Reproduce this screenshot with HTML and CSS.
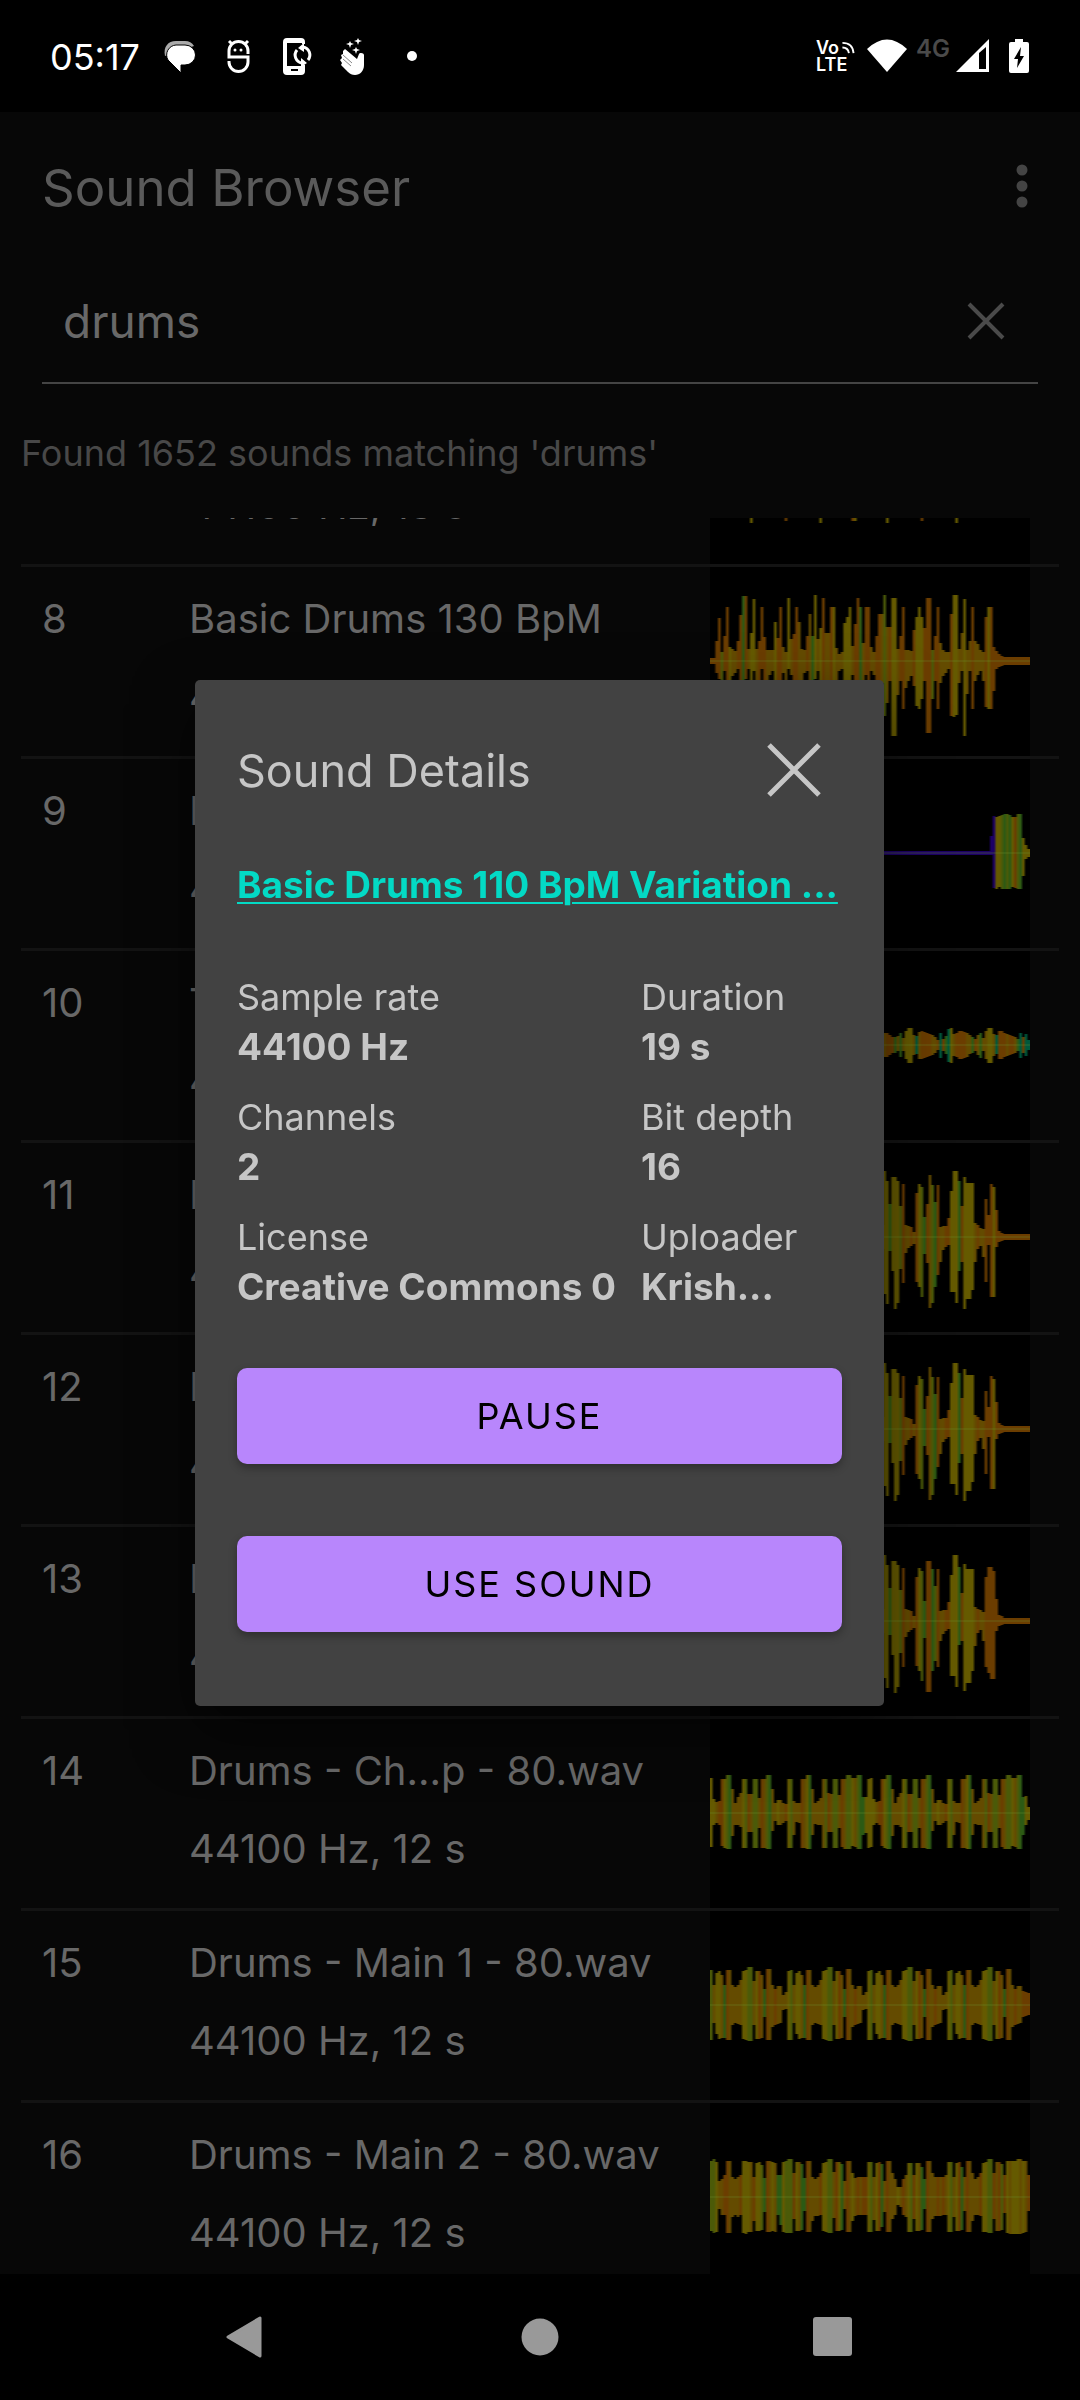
FILE: index.html
```html
<!DOCTYPE html>
<html lang="en">
<head>
<meta charset="utf-8">
<meta name="viewport" content="width=device-width, initial-scale=1">
<title>Sound Browser</title>
<link rel="stylesheet" href="styles.css">
</head>
<body>
<div class="screen">
  <header class="status">
    <span class="clock">05:17</span>
    <svg class="note" viewBox="0 0 36 40" aria-hidden="true"><path d="M3 20C1 11 6 5 14 5h9q6 0 9 5" fill="#aaa"/><path d="M14 9h9a10 9.500 0 0 1 0 20h-4v8L6 24A10 10 0 0 1 14 9z" fill="#fff" stroke="#000" stroke-width="1"/></svg>
    <svg class="note" viewBox="0 0 36 40" aria-hidden="true"><path d="M28 18v-3a9.500 9.500 0 0 0-19 0v6h19v5a9.500 9.500 0 0 1-19 0v-1M9 5l4 4M28 5l-4 4" fill="none" stroke="#fff" stroke-width="3"/><circle cx="15" cy="14" r="1.500" fill="#fff"/><circle cx="21" cy="14" r="1.500" fill="#fff"/></svg>
    <svg class="note" viewBox="0 0 36 40" aria-hidden="true"><path d="M9 2h14q4 0 4 4v2h-3v-1H9v23h15v-2l3 1v6q0 4-4 4H9q-4 0-4-4V6q0-4 4-4z" fill="#fff"/><path d="M13 34h7" stroke="#000" stroke-width="2"/><path d="M24 27a8 8 0 0 1-5-13M25 11a8 8 0 0 1 5 13" fill="none" stroke="#fff" stroke-width="3"/><path d="M26 7v9l-6-4zM23 31v-9l6 5z" fill="#fff"/></svg>
    <svg class="note" viewBox="0 0 36 40" aria-hidden="true"><path d="M7 15l2-2 12 10 2-5c1-2 5-1 5 1v10c0 6-4 10-9 10-3 0-5-1-7-3L5 29l1-2-2-3 2-2-1-3 2-1z" fill="#fff"/><path d="M7 19l9 8M7 23l8 7" stroke="#888" stroke-width="1"/><path d="M14 5l1 2 3 1-3 1-1 3-1-3-3-1 3-1zM22 2l1 2 3 1-3 1-1 3-1-3-3-1 3-1zM20 11l1 2 3 1-3 1-1 3-1-3-3-1 3-1z" fill="#fff"/></svg>
    <span class="more-notes"></span>
    <span class="status-gap"></span>
    <span class="volte"><span>Vo<svg viewBox="0 0 14 14" aria-hidden="true"><path d="M1 2q11 0 12 11M1 7q6 0 7 6" fill="none" stroke="#fff" stroke-width="2"/></svg></span><span>LTE</span></span>
    <svg class="wifi" viewBox="0 0 40 34" aria-hidden="true"><path d="M20 33L0 10q20-19 40 0z" fill="#fff"/></svg>
    <span class="net">4G</span>
    <svg class="signal" viewBox="0 0 34 34" aria-hidden="true"><path d="M33 0v33H0z" fill="#fff"/><path d="M23 14l7-6v22h-7z" fill="#000"/></svg>
    <svg class="battery" viewBox="0 0 20 34" aria-hidden="true"><path d="M6 0h8v3h4q2 0 2 2v27q0 2-2 2H2q-2 0-2-2V5q0-2 2-2h4z" fill="#fff"/><path d="M12 8L5 20h4l-1 9 7-12h-4z" fill="#000"/></svg>
  </header>

  <main class="app">
    <div class="toolbar">
      <h1>Sound Browser</h1>
      <button class="icon-button" aria-label="More options"><svg viewBox="0 0 12 44" width="12" height="44"><g fill="#444"><circle cx="6" cy="6" r="5.500"/><circle cx="6" cy="22" r="5.500"/><circle cx="6" cy="38" r="5.500"/></g></svg></button>
    </div>
    <form class="search" onsubmit="return false">
      <input type="text" aria-label="Search sounds" value="drums">
      <button type="reset" class="icon-button" aria-label="Clear"><svg viewBox="0 0 38 38" width="38" height="38"><path d="M2 2l34 34M36 2L2 36" stroke="#4a4a4a" stroke-width="4"/></svg></button>
    </form>
    <p class="found">Found 1652 sounds matching 'drums'</p>
    <ul class="list" id="list">
      <li class="row"><span class="num">7</span><div class="info"><span>Basic Drums 120 BpM</span><span>44100 Hz, 18 s</span></div><canvas class="wave" data-wave="ticks"></canvas></li>
      <li class="row"><span class="num">8</span><div class="info"><span>Basic Drums 130 BpM</span><span>44100 Hz, 16 s</span></div><canvas class="wave" data-wave="basic"></canvas></li>
      <li class="row"><span class="num">9</span><div class="info"><span>Drum Hit</span><span>44100 Hz, 4 s</span></div><canvas class="wave" data-wave="hit"></canvas></li>
      <li class="row"><span class="num">10</span><div class="info"><span>Tribal Drums</span><span>44100 Hz, 8 s</span></div><canvas class="wave" data-wave="tribal"></canvas></li>
      <li class="row"><span class="num">11</span><div class="info"><span>Basic Drums 110 BpM</span><span>44100 Hz, 19 s</span></div><canvas class="wave" data-wave="variation"></canvas></li>
      <li class="row"><span class="num">12</span><div class="info"><span>Basic Drums 120 BpM</span><span>44100 Hz, 18 s</span></div><canvas class="wave" data-wave="variation"></canvas></li>
      <li class="row"><span class="num">13</span><div class="info"><span>Basic Drums 130 BpM</span><span>44100 Hz, 16 s</span></div><canvas class="wave" data-wave="variationFast"></canvas></li>
      <li class="row"><span class="num">14</span><div class="info"><span>Drums - Ch...p - 80.wav</span><span>44100 Hz, 12 s</span></div><canvas class="wave" data-wave="chop"></canvas></li>
      <li class="row"><span class="num">15</span><div class="info"><span>Drums - Main 1 - 80.wav</span><span>44100 Hz, 12 s</span></div><canvas class="wave" data-wave="main1"></canvas></li>
      <li class="row"><span class="num">16</span><div class="info"><span>Drums - Main 2 - 80.wav</span><span>44100 Hz, 12 s</span></div><canvas class="wave" data-wave="main2"></canvas></li>
    </ul>

    <div class="scrim">
      <section class="dialog" role="dialog" aria-labelledby="dialog-title">
        <div class="dialog-head">
          <h2 id="dialog-title">Sound Details</h2>
          <button class="icon-button" aria-label="Close"><svg viewBox="0 0 54 54" width="54" height="54"><path d="M2 2l50 50M52 2L2 52" stroke="#c6c6c6" stroke-width="5"/></svg></button>
        </div>
        <a class="sound-link" href="#">Basic Drums 110 BpM Variation ...</a>
        <dl class="facts">
          <div><dt>Sample rate</dt><dd>44100 Hz</dd></div>
          <div><dt>Duration</dt><dd>19 s</dd></div>
          <div><dt>Channels</dt><dd>2</dd></div>
          <div><dt>Bit depth</dt><dd>16</dd></div>
          <div><dt>License</dt><dd>Creative Commons 0</dd></div>
          <div><dt>Uploader</dt><dd>Krish...</dd></div>
        </dl>
        <button class="action">PAUSE</button>
        <button class="action">USE SOUND</button>
      </section>
    </div>
  </main>

  <nav class="navbar">
    <button class="icon-button" aria-label="Back"><svg viewBox="0 0 42 42" width="42" height="42"><path d="M34 2v38L2 21z" fill="#999" stroke="#999" stroke-width="3" stroke-linejoin="round"/></svg></button>
    <button class="icon-button" aria-label="Home"><svg viewBox="0 0 42 42" width="42" height="42"><circle cx="21" cy="21" r="18.500" fill="#999"/></svg></button>
    <button class="icon-button" aria-label="Recents"><svg viewBox="0 0 42 42" width="42" height="42"><rect x="1" y="1" width="39" height="39" rx="3" fill="#999"/></svg></button>
  </nav>
</div>
<script src="waves.js"></script>
</body>
</html>
```
FILE: styles.css
```css
* { box-sizing: border-box; margin: 0; padding: 0; }
body { background: #000; color: #686868; font-family: "Inter", sans-serif; }
.screen { display: flex; flex-direction: column; height: 100vh; }

.icon-button { display: flex; align-items: center; justify-content: center; border: 0; background: none; cursor: pointer; }

.status { display: flex; align-items: center; height: 112px; padding: 0 50px; color: #fff; flex: none; }
.clock { font-size: 36px; line-height: 44px; padding-top: 2px; width: 112px; }
.note { width: 36px; height: 40px; margin-right: 22px; flex: none; }
.more-notes { width: 10px; height: 10px; border-radius: 50%; background: #fff; margin-left: 13px; }
.status-gap { flex: 1; }
.volte { display: flex; flex-direction: column; font-size: 18px; line-height: 17px; font-weight: 600; }
.volte svg { width: 14px; height: 13px; margin-left: 2px; }
.wifi { width: 40px; height: 34px; margin-left: 12px; }
.net { margin: 0 6px 14px 9px; font-size: 24px; line-height: 24px; font-weight: 600; color: #4a4a4a; }
.signal { width: 34px; height: 34px; }
.battery { width: 20px; height: 34px; margin: 0 1px 0 19px; }

.app { position: relative; display: flex; flex-direction: column; flex: 1; min-height: 0; background: #070707; }
.toolbar { display: flex; align-items: center; justify-content: space-between; height: 148px; padding: 0 52px 0 42px; flex: none; }
.toolbar h1 { font-size: 51px; line-height: 64px; padding-top: 4px; font-weight: 400; color: #5a5a5a; }
.search { display: flex; align-items: center; height: 124px; margin: 0 42px; padding: 0 33px 0 21px; border-bottom: 2px solid #444; flex: none; }
.search input { flex: 1; min-width: 0; border: 0; outline: 0; background: none; color: #686868; font: 400 46px "Inter", sans-serif; }
.found { padding: 45px 21px 0; height: 134px; font-size: 36px; line-height: 48px; color: #484848; flex: none; }

.list { flex: 1; min-height: 0; overflow-y: auto; scrollbar-width: none; list-style: none; padding: 0 21px; font-size: 40px; }
.row { display: flex; height: 192px; padding: 0 29px 0 21px; border-bottom: 3px solid #131313; }
.num { width: 147px; padding-top: 27px; line-height: 50px; }
.info { display: flex; flex-direction: column; flex: 1; gap: 28px; padding-top: 27px; line-height: 50px; white-space: nowrap; }
.wave { width: 320px; height: 189px; background: #000; flex: none; }

.scrim { position: absolute; inset: 0; display: flex; align-items: center; padding: 0 196px 0 195px; }
.dialog { flex: 1; min-width: 0; padding: 42px 42px 74px; border-radius: 5px; background: #424242; color: #c6c6c6; box-shadow: 0 24px 60px rgba(0, 0, 0, .5); }
.dialog-head { display: flex; align-items: center; justify-content: space-between; height: 96px; padding-right: 21px; }
.dialog h2 { font-size: 45px; font-weight: 400; }
.sound-link { display: block; margin-top: 42px; font-size: 37px; line-height: 50px; font-weight: 700; color: #03dac5; white-space: nowrap; text-decoration-thickness: 2px; text-underline-offset: 4px; }
.facts { display: grid; grid-template-columns: 404px 1fr; row-gap: 20px; margin: 62px 0 56px; font-size: 36px; line-height: 50px; white-space: nowrap; }
.facts dd { font-size: 37px; font-weight: 700; }
.action { display: block; width: 100%; height: 96px; border: 0; border-radius: 10px; background: #b886fc; color: #000; font: 400 36px "Inter", sans-serif; letter-spacing: 2px; box-shadow: 0 4px 8px rgba(0, 0, 0, .3); }
.action + .action { margin-top: 72px; }

.navbar { display: flex; align-items: center; justify-content: center; gap: 251px; height: 126px; flex: none; }
```
FILE: waves.js
```js
// Each column of a waveform is "up/down" in pixels plus an optional colour key.
const COLORS = { o: '#6b3d00', y: '#655a00', g: '#4b5a08', G: '#2c5a14', t: '#00583c', p: '#1c0066', a: '#644b00' };
const rep = (s, n) => Array(n).fill(s).join(' ');

const chopLoop = '35/34y 14/12y 11/10 12/12o 34/33o 34/35y 38/36g 38/36G 24/23 10/12 16/12 20/14 34/35y 34/35g 19/19o 19/19 34/35g 34/35g 15/15 34/35o 34/35 38/36g 38/36G 24/18 10/8 13/12y 13/12 10/10 9/8o 34/35y 34/35g 12/22 10/9 10/10 34/35o 34/35 38/36y 38/36G 24/22 10/11 12/12 15/12 34/35 34/35g 20/19o 19/19 34/35g 34/35g 18/15 34/34o 34/36 38/36g 38/36g 35/33y 35/34 38/36g 38/36G 16/22G 16/20y 34/35y';
const mainLoop = '35/35g 20/18 32/29y 34/34y 30/33 20/33G 35/35o 35/35 20/20 18/18 20/19 25/20 34/34y 35/35y 38/36g 38/36g 24/20 34/34y 34/34o 30/33 16/12G 36/35o 36/35 20/22 16/20o 19/19 19/18 10/5 13/4 34/35y';
const variationTail = '66/57y 56/67y 33/14G 60/34y 60/72y 56/66y 31/32g 53/46o 12/16 11/11 10/9o 5/7 44/45o 53/50y 50/60g 20/17G ';

const WAVES = {
  ticks: rep('20/3', 15) + ' 20/54y ' + rep('20/3', 12) + ' 20/52o ' + rep('20/3', 12) + ' 20/54y ' + rep('20/3', 11) + ' 20/52o 20/52y ' + rep('20/3', 11) + ' 20/54y ' + rep('20/3', 12) + ' 20/52o ' + rep('20/3', 12) + ' 20/54y',
  basic: '3/3o 3/3o 20/12o 43/18o 9/22g 25/10o 54/20o 14/20y 12/15 10/12 20/8o 46/22o 65/22G 65/18o 12/8 28/22y 62/10y 12/22 20/22o 54/8o 24/22o 11/22 11/14 11/10 39/22y 23/22o 54/22o 14/12 9/22 63/8y 22/14 27/22o 54/22o 39/22 12/20 11/12 25/10o 47/22 25/22G 66/18y 22/10 33/22y 63/22o 28/22 28/22 54/22o 54/22y 13/22 7/10 9/8 38/22y 44/22y 54/22y 15/14 37/22o 63/22o 54/22G 18/22 54/14o 54/22o 14/10 9/14 25/22o 47/22o 47/22 66/55g 34/42 34/20o 63/75y 63/75y 12/34 25/20o 54/48o 11/27 11/20 10/15 31/25o 44/45y 54/48y 44/38y 33/20o 63/72o 63/72o 11/38g 25/20o 54/48o 18/22 11/15 9/12 9/8 47/55o 66/56y 66/54y 12/22 28/10 62/75y 11/33 20/10 54/48o 20/20 17/14 11/10 9/20 44/46o 54/48y 54/48o 14/30o 10/8o 7/6o 5/5o ' + rep('4/4o', 10),
  hit: rep('2/2p', 105) + ' 17/2p 37/35p 36/36y 37/34y 38/36g 39/36G 39/36g 38/36G 36/34y 36/35o 39/36g 39/36G 15/23y 8/6y 4/4y',
  tribal: rep('12/12', 66) + ' 12/12o 10/10o 8/8o 8/8G 9/6 12/12G 7/6 14/14y 17/18y 17/18y 10/10 9/9t 13/14 14/14o 13/13o 12/12o 11/11o 10/10 8/8 5/5o 12/13t 6/6o 9/9G 16/17t 17/18y 11/11 12/12o 14/14o 14/14o 13/13o 12/12 10/9 8/8G 6/6o 10/10 12/13G 7/6 14/14 17/18y 17/18y 11/11 10/9t 14/14o 14/14o 12/12o 11/11 10/10o 9/9o 8/8 6/6G 12/13t 8/8o 11/11t 5/5t',
  variation: rep('12/12', 65) + ' ' + variationTail + '33/26o 62/71 52/66g 35/50G 52/38o 10/25 11/13 11/10o 19/8o 46/55y 66/55y 66/66y 56/34G 31/25o 60/72y 54/62y 54/62y 54/53y 14/25 12/12o 9/9 8/20 38/45o 22/8o 53/60o 50/60y 27/10o 6/5o 4/4o ' + rep('3/3o', 10),
  variationFast: rep('12/12', 65) + ' ' + variationTail + '60/71o 60/71o 52/50G 35/40g 52/46o 10/20 11/13 11/10o 19/8o 46/55y 66/55y 66/66y 54/24G 28/20o 57/70y 52/62y 52/62y 52/50y 14/25 12/12o 11/9 9/20 44/46o 54/52o 54/58o 50/58o 22/10o 6/5o 5/4o ' + rep('3/3o', 10),
  chop: chopLoop + ' ' + chopLoop.split(' ').slice(0, 58).join(' ') + ' 17/12y 6/7y',
  main1: mainLoop + ' ' + mainLoop + ' ' + mainLoop + ' ' + mainLoop.split(' ').slice(0, 27).join(' ') + ' 14/12o 13/11o 12/10o',
  main2: '36/34g 38/36g 35/35y 16/12 18/18 22/18o 36/36o 36/36 20/20 18/18 20/20 22/18o 36/36y 36/37y 35/35y 35/35 20/24o 34/34y 35/34y 32/33g 19/15G 36/35o 36/35 35/34y 34/35 22/18G 22/28G 35/35y 36/36g 38/36g 38/36g 24/22o 35/34y 35/34 33/33G 19/14G 36/35o 36/35 20/24 18/19 20/19 24/18o 34/34y 35/35y 38/36g 38/36g 25/21 35/34o 35/34y 33/33G 16/12 36/35o 36/35 24/24y 19/19 20/18o 20/18 20/18o 20/18o 35/35y 35/35g 20/23 34/34y 35/34o 33/30G 16/15 36/35o 36/35 24/22 18/18 10/8y 10/10 18/18o 22/20 34/35y 34/35g 22/22o 34/34y 34/34 30/33G 18/12G 36/35o 36/35 24/22 20/19 20/19o 20/19 20/18o 22/18 35/35y 35/35g 20/20 34/34y 35/34o 30/33G 20/14 36/35o 36/35 24/24 18/18 20/18 24/19o 34/35y 35/35y 38/36g 38/36g 24/22o 35/34 35/34o 33/33g 22/16o 36/36y 36/37 36/37y 36/37y 38/37y 38/37 36/36y 36/35 22/14o'
};

document.querySelectorAll('.wave').forEach((canvas) => {
  canvas.width = 120;
  canvas.height = 189;
  const ctx = canvas.getContext('2d');
  WAVES[canvas.dataset.wave].trim().split(/\s+/).forEach((col, x) => {
    const [, up, down, key] = col.match(/(\d+)\/(\d+)(\w?)/);
    ctx.fillStyle = COLORS[key || 'a'];
    ctx.fillRect(x, 94 - up, 1, +up + +down);
  });
  ctx.fillStyle = 'rgba(110, 150, 50, .2)';
  ctx.fillRect(0, 93, 120, 2);
});

document.getElementById('list').scrollTop = 143;
```
